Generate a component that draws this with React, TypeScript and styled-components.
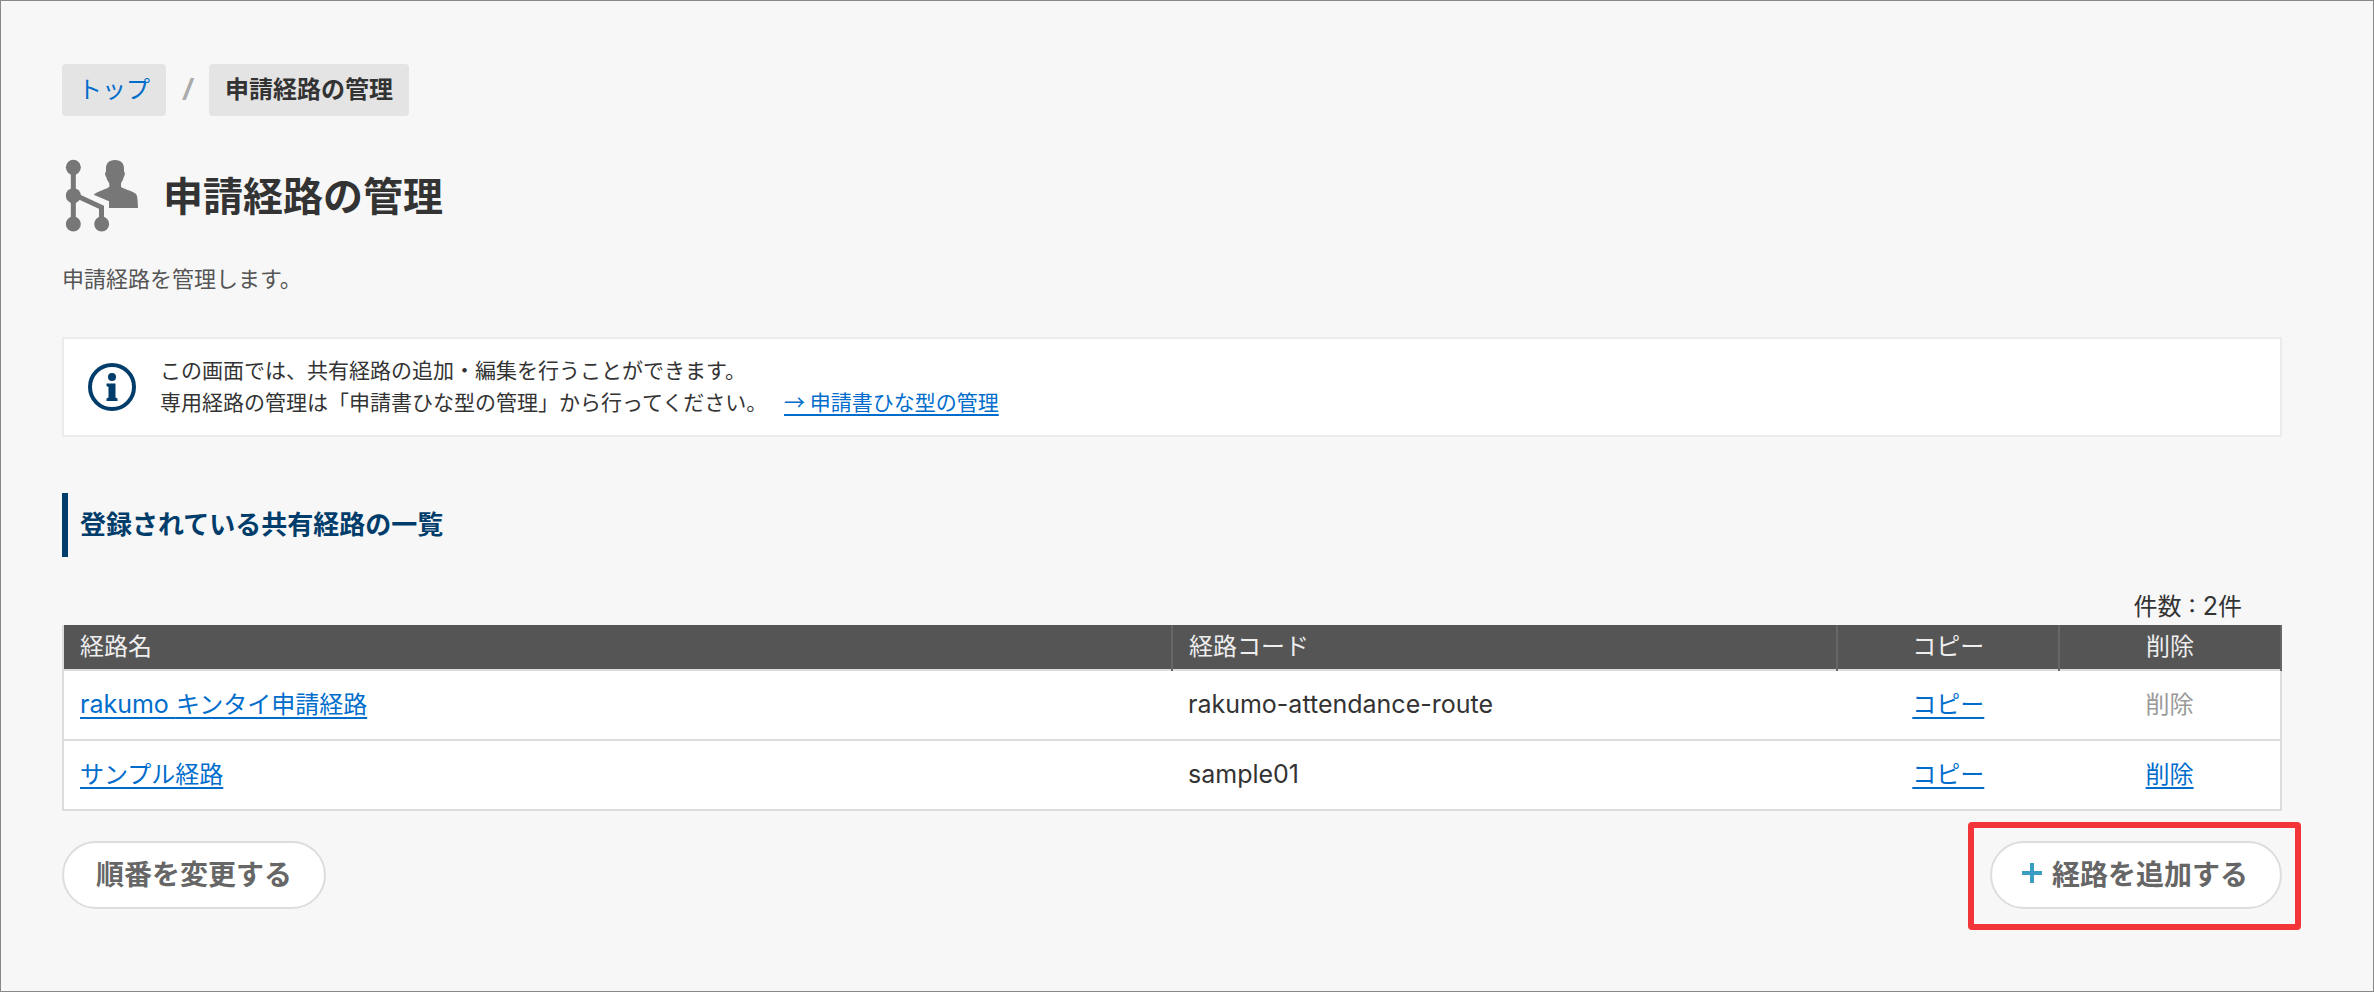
import React from "react";
import styled, { createGlobalStyle } from "styled-components";

const GlobalStyle = createGlobalStyle`
  *, *::before, *::after { box-sizing: border-box; }
  body {
    margin: 0;
    background: #f7f7f7;
    color: #333;
    font-family: "Noto Sans CJK JP", sans-serif;
    font-size: 24px;
    line-height: 36px;
  }
`;

const Page = styled.div`
  min-height: 100vh;
  padding: 63px 91px 63px 61px;
  border: 1px solid #888;
`;

const Link = styled.a`
  color: #006dcc;
  text-decoration: underline;
  text-decoration-thickness: 2px;
  text-underline-offset: 4px;
`;

const Breadcrumb = styled.ol`
  display: flex;
  margin: 0;
  padding: 0;
  list-style: none;
  line-height: 48px;
`;

const Crumb = styled.li<{ $current?: boolean }>`
  padding: 0 16px 4px;
  border-radius: 4px;
  background: #e4e4e4;
  font-weight: ${(p) => (p.$current ? 700 : 400)};

  a {
    color: #006dcc;
    text-decoration: none;
  }
`;

const Separator = styled.li`
  width: 43px;
  color: #aaa;
  text-align: center;
  font-family: "Liberation Sans", sans-serif;
  font-size: 30px;
  font-style: italic;
  font-weight: 700;
  line-height: 52px;
`;

const TitleRow = styled.header`
  display: flex;
  align-items: center;
  gap: 24px;
  margin-top: 43px;
  padding-left: 3px;
`;

const Title = styled.h1`
  margin: 0;
  padding-bottom: 4px;
  font-size: 40px;
  line-height: 60px;
`;

const Description = styled.p`
  margin: 26px 0 0;
  color: #555;
  font-size: 22px;
`;

const Notice = styled.section`
  display: flex;
  align-items: center;
  gap: 24px;
  margin-top: 42px;
  padding: 14px 24px;
  border: 2px solid #ebebeb;
  background: #fff;

  p {
    margin: 0;
    padding-bottom: 4px;
    font-size: 21px;
    line-height: 32px;
  }

  a {
    margin-left: 12px;
  }
`;

const SectionTitle = styled.h2`
  margin: 56px 0 0;
  padding: 0 0 4px 12px;
  border-left: 6px solid #003d6b;
  color: #003d6b;
  font-size: 26px;
  line-height: 60px;
`;

const Count = styled.p`
  margin: 30px 40px 0 0;
  padding-bottom: 2px;
  text-align: right;
`;

const RouteTable = styled.table`
  width: 100%;
  table-layout: fixed;
  border: 2px solid #ddd;
  border-top: none;
  border-collapse: collapse;
  background: #fff;
`;

const HeadCell = styled.th<{ $width: string; $center?: boolean }>`
  width: ${(p) => p.$width};
  height: 45px;
  padding: 0 16px 4px;
  border-right: 2px solid #666;
  background: #555;
  color: #eee;
  font-weight: 400;
  text-align: ${(p) => (p.$center ? "center" : "left")};
`;

const Cell = styled.td<{ $center?: boolean; $muted?: boolean }>`
  height: 70px;
  padding: 0 16px 4px;
  border-top: 2px solid #ddd;
  color: ${(p) => (p.$muted ? "#999" : "#333")};
  text-align: ${(p) => (p.$center ? "center" : "left")};
`;

const Latin = styled.span`
  font-family: Inter, "Noto Sans CJK JP", sans-serif;
  font-size: 25px;
  line-height: 24px;
  white-space: pre-wrap;
`;

const Actions = styled.div`
  display: flex;
  justify-content: space-between;
  margin-top: 30px;
`;

const PillButton = styled.button<{ $withIcon?: boolean }>`
  display: flex;
  align-items: center;
  gap: 10px;
  height: 68px;
  padding: 0 32px 4px ${(p) => (p.$withIcon ? "30px" : "32px")};
  border: 2px solid #ddd;
  border-radius: 34px;
  background: #fff;
  color: #666;
  font: inherit;
  font-size: 28px;
  font-weight: 700;
  cursor: pointer;
`;

const Highlight = styled.div`
  position: relative;

  &::after {
    content: "";
    position: absolute;
    inset: -19px -19px -21px -22px;
    border: 6px solid #f33539;
    border-radius: 4px;
    pointer-events: none;
  }
`;

const RouteIcon = () => (
  <svg width="74" height="74" viewBox="45 27 222 222" fill="#777" aria-hidden="true">
    <circle cx="70" cy="52" r="22.5" />
    <circle cx="70" cy="137" r="22.5" />
    <circle cx="70" cy="222" r="22.5" />
    <circle cx="155" cy="222" r="22.5" />
    <path d="M70 52V222M70 133L154.500 172V222" fill="none" stroke="#777" strokeWidth="15" />
    <path d="M195 30C214 30 223 41 222 58V65C226 66 225 76 221 82C219 92 214 96 213 101V110C217 116 248 122 257 131C263 137 263 150 264 174H177V154L131 134C142 123 173 117 178 110V101C176 96 171 92 169 82C165 76 164 66 168 65V58C167 41 176 30 195 30Z" />
  </svg>
);

const InfoIcon = () => (
  <svg width="48" height="48" viewBox="0 0 48 48" fill="#003d6b" aria-hidden="true">
    <circle cx="24" cy="24" r="22" fill="none" stroke="#003d6b" strokeWidth="4" />
    <circle cx="24" cy="14" r="4" />
    <path d="M18.500 20.500H27.500V34.500L29.500 35.500V38H18.500V35.500L20.500 34.500V24L18.500 23Z" />
  </svg>
);

const PlusIcon = () => (
  <svg width="20" height="20" viewBox="0 0 20 20" aria-hidden="true">
    <path d="M10 0V20M0 10H20" stroke="#3c9dc2" strokeWidth="4" />
  </svg>
);

const routes = [
  { latin: "rakumo ", name: "キンタイ申請経路", code: "rakumo-attendance-route", deletable: false },
  { latin: "", name: "サンプル経路", code: "sample01", deletable: true },
];

export default function App() {
  return (
    <>
      <GlobalStyle />
      <Page>
        <nav aria-label="パンくずリスト">
          <Breadcrumb>
            <Crumb><a href="#top">トップ</a></Crumb>
            <Separator aria-hidden="true">/</Separator>
            <Crumb $current aria-current="page">申請経路の管理</Crumb>
          </Breadcrumb>
        </nav>
        <main>
          <TitleRow>
            <RouteIcon />
            <Title>申請経路の管理</Title>
          </TitleRow>
          <Description>申請経路を管理します。</Description>
          <Notice>
            <InfoIcon />
            <p>
              この画面では、共有経路の追加・編集を行うことができます。
              <br />
              専用経路の管理は「申請書ひな型の管理」から行ってください。{" "}
              <Link href="#templates">→ 申請書ひな型の管理</Link>
            </p>
          </Notice>
          <SectionTitle>登録されている共有経路の一覧</SectionTitle>
          <Count>件数<Latin>{" : 2"}</Latin>件</Count>
          <RouteTable>
            <thead>
              <tr>
                <HeadCell $width="50%">経路名</HeadCell>
                <HeadCell $width="30%">経路コード</HeadCell>
                <HeadCell $width="10%" $center>コピー</HeadCell>
                <HeadCell $width="10%" $center>削除</HeadCell>
              </tr>
            </thead>
            <tbody>
              {routes.map((route) => (
                <tr key={route.code}>
                  <Cell>
                    <Link href={`#${route.code}`}>
                      {route.latin && <Latin>{route.latin}</Latin>}
                      {route.name}
                    </Link>
                  </Cell>
                  <Cell><Latin>{route.code}</Latin></Cell>
                  <Cell $center><Link href="#copy">コピー</Link></Cell>
                  <Cell $center $muted={!route.deletable}>
                    {route.deletable ? <Link href="#delete">削除</Link> : "削除"}
                  </Cell>
                </tr>
              ))}
            </tbody>
          </RouteTable>
          <Actions>
            <PillButton type="button">順番を変更する</PillButton>
            <Highlight>
              <PillButton type="button" $withIcon>
                <PlusIcon />
                経路を追加する
              </PillButton>
            </Highlight>
          </Actions>
        </main>
      </Page>
    </>
  );
}
